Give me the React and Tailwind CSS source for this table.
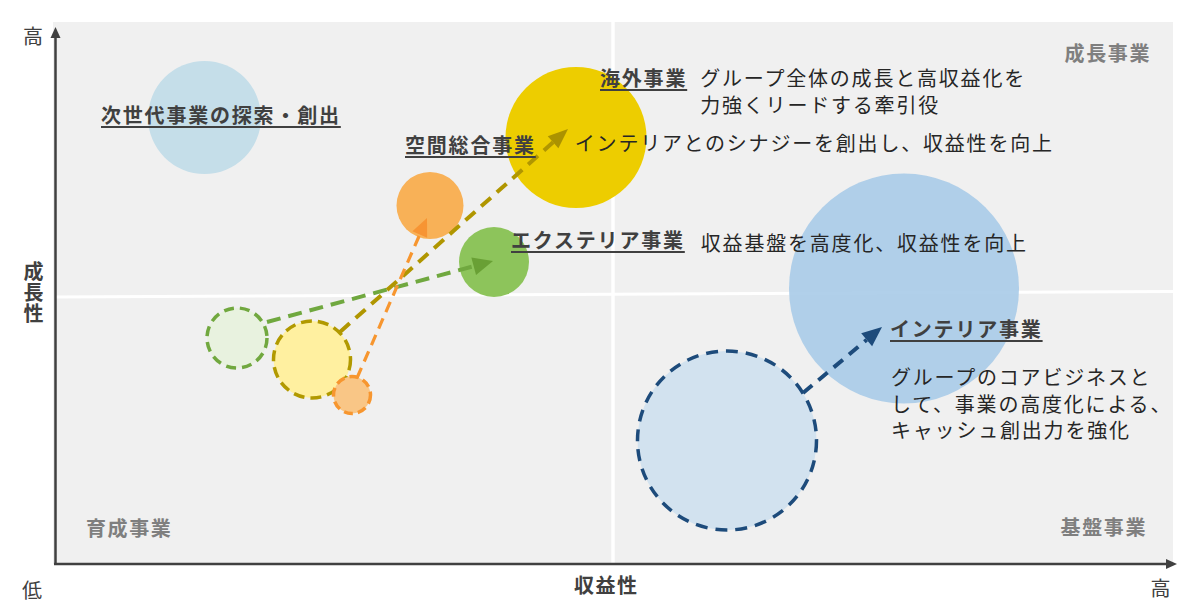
import React from "react";

function arrowGeom(x1, y1, x2, y2, len, w) {
  const dx = x2 - x1;
  const dy = y2 - y1;
  const L = Math.hypot(dx, dy);
  const ux = dx / L;
  const uy = dy / L;
  const bx = x2 - ux * len;
  const by = y2 - uy * len;
  const nx = -uy;
  const ny = ux;
  return {
    bx,
    by,
    head: `${x2},${y2} ${bx + (nx * w) / 2},${by + (ny * w) / 2} ${bx - (nx * w) / 2},${by - (ny * w) / 2}`,
  };
}

function Arrow({ x1, y1, x2, y2, len, w, color, headColor, width, dash }) {
  const g = arrowGeom(x1, y1, x2, y2, len, w);
  return (
    <g>
      <line x1={x1} y1={y1} x2={g.bx} y2={g.by} stroke={color} strokeWidth={width} strokeDasharray={dash} />
      <polygon points={g.head} fill={headColor} />
    </g>
  );
}

const heading =
  "whitespace-nowrap text-[20px] leading-none tracking-[1.8px] font-bold text-[#404040] underline decoration-2 underline-offset-[3px]";
const body = "whitespace-nowrap text-[20px] tracking-[1.8px] text-[#262626]";
const quad = "whitespace-nowrap text-[20px] leading-none tracking-[1.6px] font-bold text-[#7f7f7f]";

function Chart() {
  return (
    <svg className="absolute inset-0 overflow-visible" width="1120" height="542" viewBox="53 22 1120 542">
      {/* quadrant dividers */}
      <line x1="55" y1="297" x2="1173" y2="291.5" stroke="#ffffff" strokeWidth="3" />
      <line x1="613" y1="22" x2="613" y2="564" stroke="#ffffff" strokeWidth="3.5" />

      {/* solid circles */}
      <circle cx="204.5" cy="117.5" r="56.5" fill="#c5dee9" />
      <circle cx="576" cy="137.5" r="70.5" fill="#edcd00" />
      <circle cx="430" cy="205.5" r="33.5" fill="#f8b157" />
      <circle cx="494" cy="262" r="35" fill="#8dc45b" />
      <circle cx="904" cy="288.5" r="115" fill="#a8cbe8" fillOpacity="0.9" />

      {/* dashed circles */}
      <circle cx="727" cy="440.5" r="89.5" fill="#d2e2ef" stroke="#1d4b7b" strokeWidth="3.5" strokeDasharray="12 8" />
      <circle cx="237" cy="338" r="30" fill="#e8f2df" stroke="#71a83f" strokeWidth="3.5" strokeDasharray="10 6" />
      <circle cx="312" cy="359.5" r="38.5" fill="#fff0a0" stroke="#b19900" strokeWidth="3.5" strokeDasharray="11 6" />
      <circle cx="352" cy="395" r="18.5" fill="#f9c686" stroke="#f7962f" strokeWidth="3.5" strokeDasharray="9 5" />

      {/* arrows */}
      <Arrow x1={267} y1={322} x2={493} y2={261} len={20} w={18} color="#70a83f" headColor="#69a035" width={4} dash="14 8" />
      <Arrow x1={340} y1={332} x2={568} y2={129} len={20} w={16} color="#b09600" headColor="#ab9200" width={4} dash="13 8" />
      <Arrow x1={357} y1={378} x2={427} y2={218} len={18} w={16} color="#f7962f" headColor="#f79433" width={3.2} dash="11 7" />
      <Arrow x1={803} y1={393} x2={882} y2={327} len={20} w={17} color="#1d4b7b" headColor="#1d4b7b" width={4} dash="12 8" />

      {/* axes */}
      <line x1="55.5" y1="565" x2="55.5" y2="36" stroke="#404040" strokeWidth="2.5" />
      <polygon points="55.5,27 50.5,38 60.5,38" fill="#404040" />
      <line x1="54" y1="564" x2="1167" y2="564" stroke="#404040" strokeWidth="2.5" />
      <polygon points="1177,564 1166,559 1166,569" fill="#404040" />
    </svg>
  );
}

export default function App() {
  return (
    <div className="w-[1192px] h-[610px] bg-white grid grid-cols-[53px_1120px_19px] grid-rows-[22px_542px_46px] font-['Noto_Sans_CJK_JP',sans-serif] text-[#404040]">
      <div className="col-span-3" />

      {/* Y axis labels */}
      <div className="flex flex-col items-start pl-[23px] pt-[4px]">
        <span className="text-[20px] leading-none">高</span>
        <span className="mt-[215px] [writing-mode:vertical-rl] text-[20px] leading-none tracking-[1px] font-bold">
          成長性
        </span>
      </div>

      {/* Plot area */}
      <div className="relative bg-[#f0f0f0]">
        <Chart />

        {/* quadrant labels */}
        <div className="absolute inset-0 flex flex-col justify-between pt-[21px] pb-[26px] pl-[33px] pr-[22px]">
          <div className="flex justify-end">
            <span className={quad}>成長事業</span>
          </div>
          <div className="flex justify-between items-end pr-[4px]">
            <span className={quad}>育成事業</span>
            <span className={`${quad} mb-[1px]`}>基盤事業</span>
          </div>
        </div>

        {/* business labels (placed on the chart canvas) */}
        <span className={`${heading} absolute left-[48px] top-[83px]`}>次世代事業の探索・創出</span>

        <div className="absolute left-[547px] top-[46px] flex items-start gap-[13px]">
          <span className={heading}>海外事業</span>
          <div className={`${body} flex flex-col gap-[7px] leading-none`}>
            <span>グループ全体の成長と高収益化を</span>
            <span>力強くリードする牽引役</span>
          </div>
        </div>

        <div className="absolute left-[352px] top-[111px] flex items-start gap-[39px]">
          <span className={`${heading} mt-[2px]`}>空間総合事業</span>
          <span className={`${body} leading-none`}>インテリアとのシナジーを創出し、収益性を向上</span>
        </div>

        <div className="absolute left-[458px] top-[208px] flex items-start gap-[16px]">
          <span className={heading}>エクステリア事業</span>
          <span className={`${body} leading-none mt-[3px]`}>収益基盤を高度化、収益性を向上</span>
        </div>

        <div className="absolute left-[837px] top-[297px] flex flex-col items-start gap-[25px]">
          <span className={`${heading} text-[#262626]`}>インテリア事業</span>
          <span className={`${body} ml-[1px] leading-[26.5px]`}>
            グループのコアビジネスと
            <br />
            して、事業の高度化による、
            <br />
            キャッシュ創出力を強化
          </span>
        </div>
      </div>

      <div />

      {/* X axis labels */}
      <div className="col-span-3 flex items-start">
        <span className="ml-[22px] mt-[16px] text-[20px] leading-none">低</span>
        <span className="ml-[532px] mt-[11px] text-[20px] leading-none font-bold tracking-[1.5px]">収益性</span>
        <span className="ml-[512px] mt-[14px] text-[20px] leading-none">高</span>
      </div>
    </div>
  );
}
